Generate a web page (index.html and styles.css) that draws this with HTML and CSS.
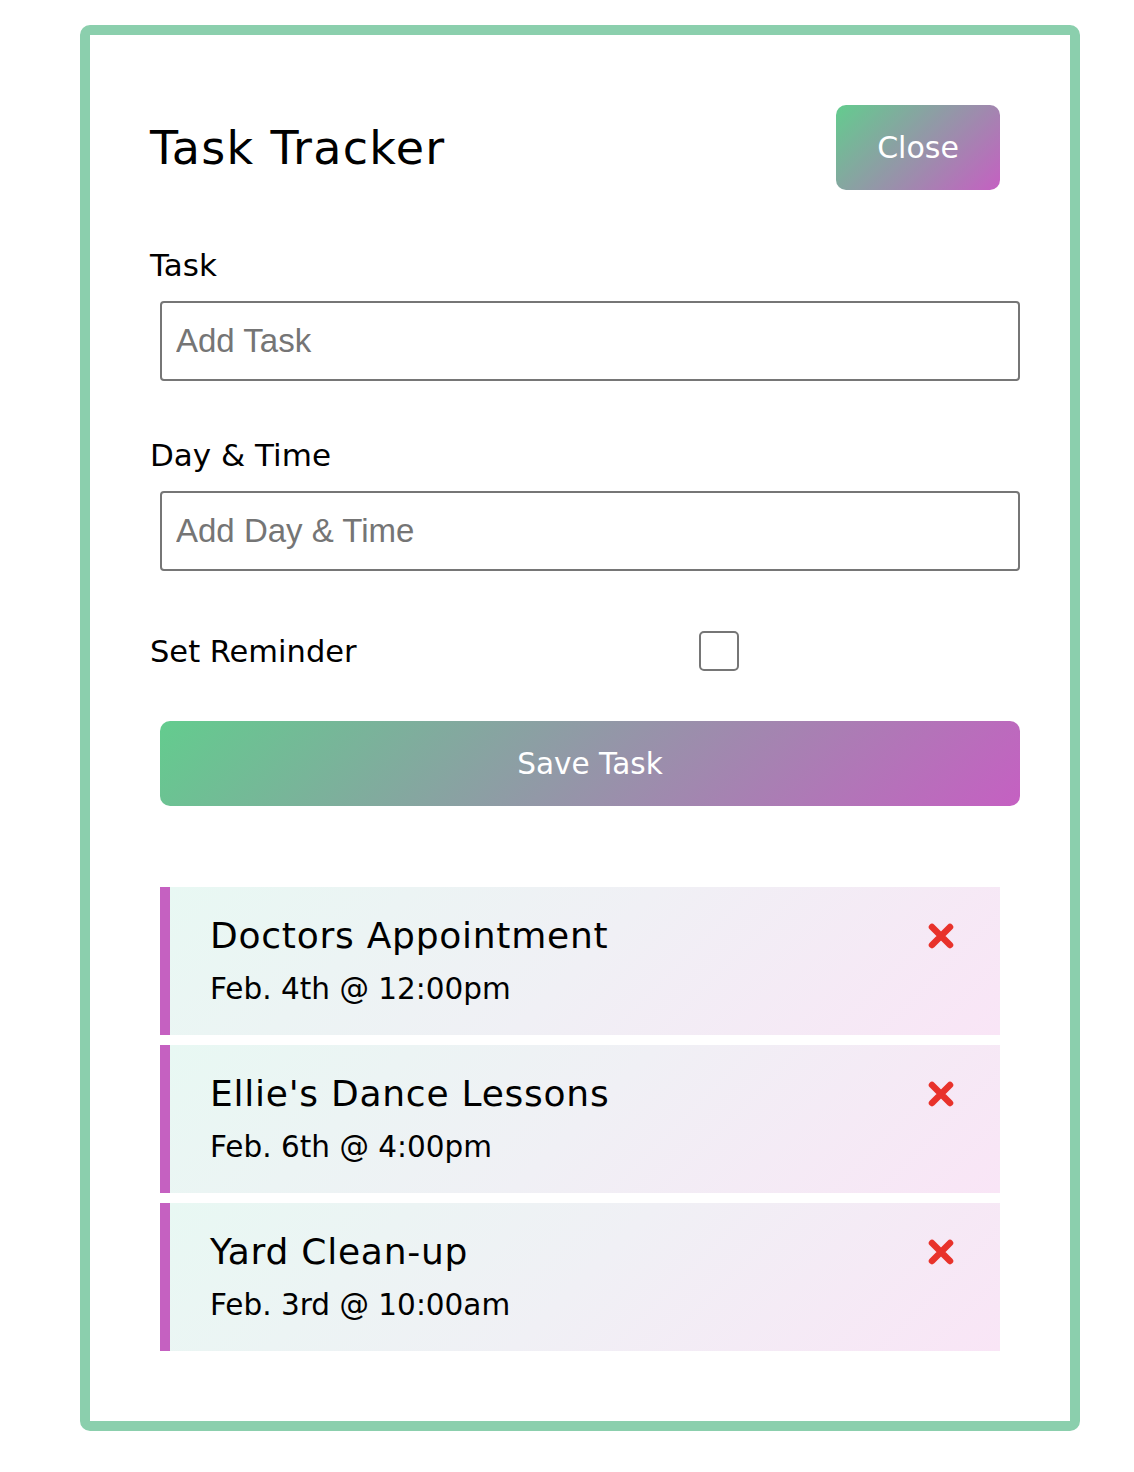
FILE: index.html
```html
<!DOCTYPE html>
<html lang="en">
<head>
<meta charset="utf-8">
<title>Task Tracker</title>
<link rel="stylesheet" href="styles.css">
</head>
<body>
<div class="container">
  <header class="header">
    <h1 class="title">Task Tracker</h1>
    <button class="btn btn-close" type="button">Close</button>
  </header>
  <form class="add-form">
    <div class="form-control">
      <label class="label">Task</label>
      <input class="text-input" type="text" placeholder="Add Task">
    </div>
    <div class="form-control">
      <label class="label">Day &amp; Time</label>
      <input class="text-input" type="text" placeholder="Add Day &amp; Time">
    </div>
    <div class="form-control form-control-check">
      <label class="label check-label">Set Reminder</label>
      <span class="check-wrap"><input class="check" type="checkbox"></span>
    </div>
    <button class="btn btn-block" type="button">Save Task</button>
  </form>
  <div class="tasks">
    <div class="task reminder">
      <h3 class="task-name">Doctors Appointment
        <svg class="del" width="28" height="28" viewBox="0 0 28 28"><path d="M5 5 L23 23 M23 5 L5 23" stroke="#e8322b" stroke-width="6.5" stroke-linecap="round" fill="none"/></svg>
      </h3>
      <p class="task-day">Feb. 4th @ 12:00pm</p>
    </div>
    <div class="task reminder">
      <h3 class="task-name">Ellie's Dance Lessons
        <svg class="del" width="28" height="28" viewBox="0 0 28 28"><path d="M5 5 L23 23 M23 5 L5 23" stroke="#e8322b" stroke-width="6.5" stroke-linecap="round" fill="none"/></svg>
      </h3>
      <p class="task-day">Feb. 6th @ 4:00pm</p>
    </div>
    <div class="task reminder">
      <h3 class="task-name">Yard Clean-up
        <svg class="del" width="28" height="28" viewBox="0 0 28 28"><path d="M5 5 L23 23 M23 5 L5 23" stroke="#e8322b" stroke-width="6.5" stroke-linecap="round" fill="none"/></svg>
      </h3>
      <p class="task-day">Feb. 3rd @ 10:00am</p>
    </div>
  </div>
</div>
</body>
</html>
```
FILE: styles.css
```css
* {
  box-sizing: border-box;
}

body {
  margin: 0;
  background: #ffffff;
  font-family: "DejaVu Sans", "Open Sans", sans-serif;
  color: #000;
}

.container {
  width: 1000px;
  margin: 25px 0 0 80px;
  border: 10px solid #8bcfad;
  border-radius: 10px;
  padding: 60px;
}

.header {
  display: flex;
  justify-content: space-between;
  align-items: center;
  margin-bottom: 40px;
}

.title {
  margin: 0;
  font-size: 46px;
  font-weight: normal;
  letter-spacing: 1.3px;
}

.btn {
  display: inline-block;
  border: none;
  color: #fff;
  margin: 10px;
  height: 85px;
  border-radius: 10px;
  font-family: "DejaVu Sans", "Open Sans", sans-serif;
  font-size: 30px;
  background: linear-gradient(135deg, #63cc8e, #c560c2);
  cursor: pointer;
}

.btn-close {
  width: 164px;
  padding: 0;
}

.btn-block {
  display: block;
  width: 100%;
  font-size: 29.5px;
}

.add-form {
  margin-bottom: 81px;
}

.form-control {
  display: flow-root;
  margin: 40px 0;
}

.label {
  display: block;
  font-size: 31px;
  line-height: 51px;
}

.text-input {
  display: block;
  width: 100%;
  height: 80px;
  margin: 10px 10px 9px;
  padding: 6px 14px;
  border: 2px solid #767676;
  border-radius: 4px;
  font-family: "Liberation Sans", Arial, sans-serif;
  font-size: 33px;
  background: #fff;
}

.text-input::placeholder {
  color: #757575;
}

.form-control-check {
  display: flex;
  align-items: center;
  justify-content: space-between;
  height: 60px;
  margin-top: 41px;
}

.check-label {
  flex: 1;
  font-size: 30.5px;
}

.check-wrap {
  flex: 2;
  display: flex;
  justify-content: center;
  padding-right: 6px;
}

.check {
  appearance: none;
  -webkit-appearance: none;
  width: 40px;
  height: 40px;
  margin: 10px 0;
  border: 2px solid #767676;
  border-radius: 5px;
  background: #fff;
}

.task {
  margin: 10px;
  padding: 22px 40px 19px;
  background: linear-gradient(135deg, #e8f8f3, #f0f0f5 50%, #f9e5f6);
}

.task.reminder {
  border-left: 10px solid #c561c1;
}

.task-name {
  display: flex;
  align-items: center;
  justify-content: space-between;
  margin: 0;
  font-size: 36px;
  font-weight: normal;
  line-height: 54px;
  letter-spacing: 0.75px;
}

.del {
  margin-right: 5px;
  flex: none;
}

.task-day {
  margin: 0;
  font-size: 29.5px;
  line-height: 53px;
}
```
